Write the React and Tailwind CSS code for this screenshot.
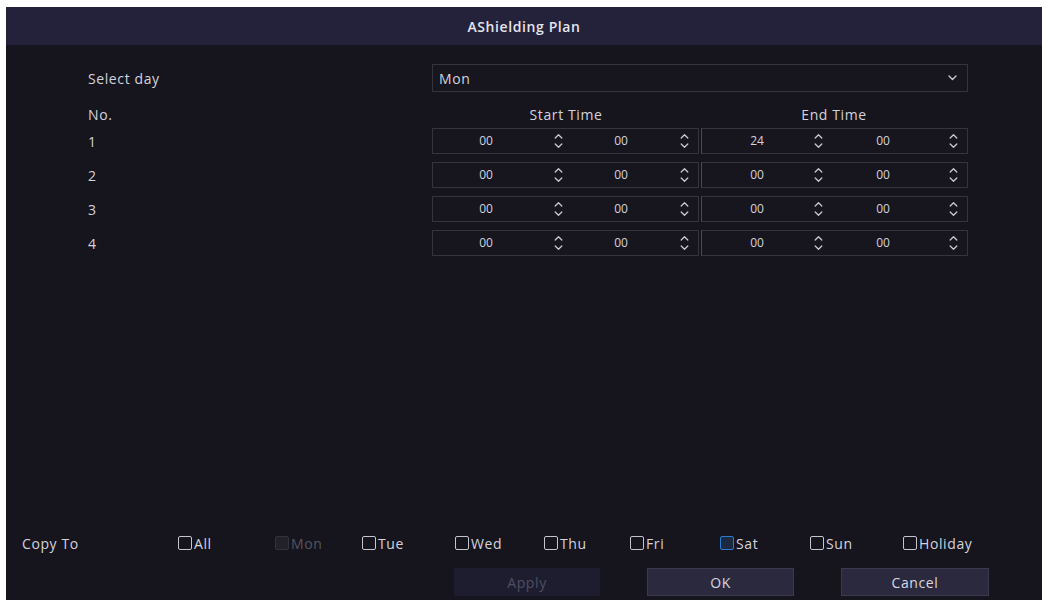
import React from "react";

const rows = [
  ["00", "00", "24", "00"],
  ["00", "00", "00", "00"],
  ["00", "00", "00", "00"],
  ["00", "00", "00", "00"],
];

const days = [
  { label: "All", w: "w-[97px]" },
  { label: "Mon", w: "w-[87px]", disabled: true },
  { label: "Tue", w: "w-[93px]" },
  { label: "Wed", w: "w-[89px]" },
  { label: "Thu", w: "w-[86px]" },
  { label: "Fri", w: "w-[90px]" },
  { label: "Sat", w: "w-[90px]", focus: true },
  { label: "Sun", w: "w-[93px]" },
  { label: "Holiday", w: "w-auto" },
];

function Spinner() {
  return (
    <svg width="9" height="16" viewBox="0 0 9 16" fill="none" stroke="#c9c9d2" strokeWidth="1.3" strokeLinecap="round" strokeLinejoin="round">
      <path d="M1.2 5 L4.5 1.8 L7.8 5" />
      <path d="M1.2 11 L4.5 14.2 L7.8 11" />
    </svg>
  );
}

function TimeHalf({ h, m, left }) {
  return (
    <div className={`flex h-full flex-1 items-center border border-[#34333f] bg-[#17161f] ${left ? "" : "border-l-[#4a4958]"}`}>
      <span className={`${left ? "w-[106px]" : "w-[110px]"} text-center`}>{h}</span>
      <span className={`flex w-[20px] justify-center ${left ? "ml-[9px]" : "-ml-[4px]"}`}><Spinner /></span>
      <span className={`${left ? "ml-[9px] w-[88px]" : "ml-[10px] w-[90px]"} text-center`}>{m}</span>
      <span className={`flex w-[20px] justify-center ${left ? "ml-[9px]" : "ml-[15px]"}`}><Spinner /></span>
    </div>
  );
}

export default function App() {
  return (
    <div className="h-[606px] w-[1042px] bg-white pl-[6px] pt-[7px]" style={{ fontFamily: '"Open Sans", "Noto Sans", sans-serif' }}>
      <div className="flex h-[593px] w-[1036px] flex-col bg-[#16151e] text-[14px] tracking-[0.6px] text-[#d3d3dc]">
        <div className="flex h-[38px] items-center justify-center bg-[#23223a] font-semibold text-[#e4e4ec]">
          AShielding Plan
        </div>

        <div className="flex flex-col pl-[82px] pt-[19px]">
          <div className="flex h-[28px] items-center">
            <span className="w-[344px]">Select day</span>
            <div className="flex h-full w-[536px] items-center justify-between border border-[#34333f] bg-[#17161f] pl-[6px] pr-[10px]">
              <span>Mon</span>
              <svg width="9" height="6" viewBox="0 0 9 6" fill="none" stroke="#c9c9d2" strokeWidth="1.4" strokeLinecap="round" strokeLinejoin="round">
                <path d="M1 1 L4.5 4.5 L8 1" />
              </svg>
            </div>
          </div>

          <div className="mt-[10px] flex h-[24px] items-center">
            <span className="w-[344px]">No.</span>
            <div className="flex w-[536px]">
              <span className="flex-1 text-center">Start Time</span>
              <span className="flex-1 text-center">End Time</span>
            </div>
          </div>

          <div className="mt-[2px] flex flex-col gap-[8px]">
            {rows.map((r, i) => (
              <div key={i} className="flex h-[26px] items-center">
                <span className="w-[344px]">{i + 1}</span>
                <div className="flex h-full w-[536px] gap-[2px] text-[12px] tracking-normal">
                  <TimeHalf h={r[0]} m={r[1]} left />
                  <TimeHalf h={r[2]} m={r[3]} />
                </div>
              </div>
            ))}
          </div>
        </div>

        <div className="flex-1" />

        <div className="flex h-[20px] items-center pl-[16px]">
          <span className="w-[156px]">Copy To</span>
          {days.map((d) => (
            <div key={d.label} className={`flex items-center gap-[2px] ${d.w} ${d.disabled ? "text-[#55545f]" : ""}`}>
              <span
                className={`inline-block h-[14px] w-[14px] rounded-[2px] border ${
                  d.focus ? "border-[#2a7bd0] bg-[#1b2a40]" : d.disabled ? "border-[#33323c] bg-[#22212a]" : "border-[#c4c4cc]"
                }`}
              />
              <span>{d.label}</span>
            </div>
          ))}
        </div>

        <div className="mb-[4px] mt-[15px] flex gap-[47px] pl-[448px]">
          <button className="h-[28px] w-[146px] bg-[#1e1d30] text-[#4f4e62]">Apply</button>
          <button className="h-[28px] w-[147px] border border-[#3a394e] bg-[#2a293d] text-[#d8d8e0]">OK</button>
          <button className="h-[28px] w-[148px] border border-[#3a394e] bg-[#2a293d] text-[#d8d8e0]">Cancel</button>
        </div>
      </div>
    </div>
  );
}
